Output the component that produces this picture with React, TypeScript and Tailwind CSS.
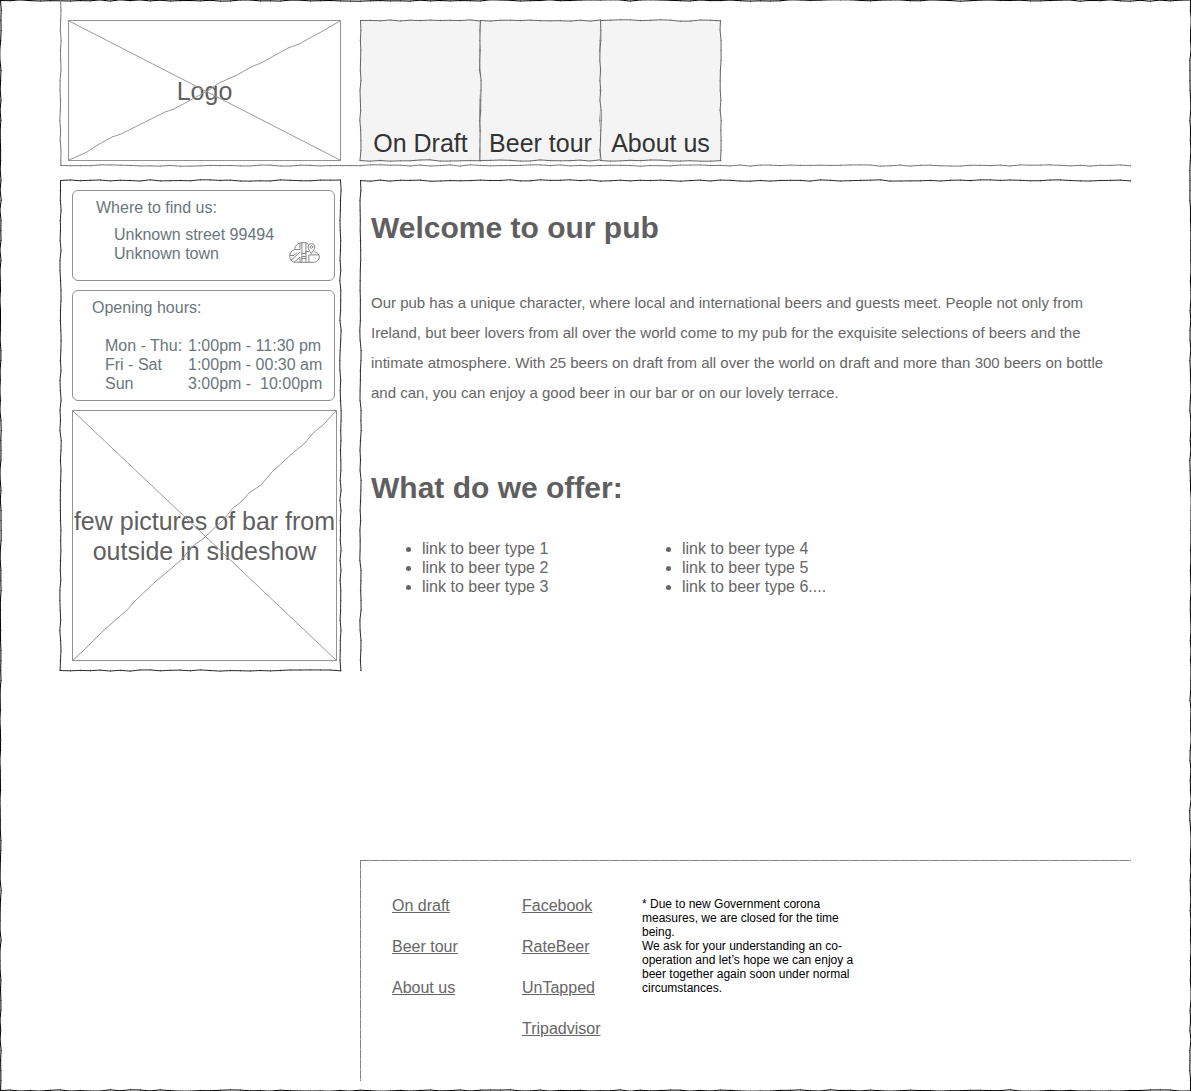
import React from "react";

type Side = "top" | "right" | "bottom" | "left";

const LENGTH = 4000;
const STEP = 10;

/** Builds a hand-drawn stroke with a small tick at every joint. */
function sketchPath(seed: number, vertical: boolean, flat: boolean) {
  let state = seed * 7919 + 17;
  const random = () => {
    state = (state * 1103515245 + 12345) % 2147483648;
    return state / 2147483648;
  };
  let line = "M0,2.5";
  let ticks = "";
  if (vertical) line = "M2.5,0";
  for (let at = STEP; at <= LENGTH; at += STEP) {
    const off = flat ? 2.5 : 2.5 + Math.round((random() * 2 - 1) * 7) / 10;
    const tickAt = at + 0.5;
    if (vertical) {
      line += `L${off},${at}`;
      ticks += `M${off - 1},${tickAt}h2`;
    } else {
      line += `L${at},${off}`;
      ticks += `M${tickAt},${off - 1}v2`;
    }
  }
  return { line, ticks };
}

const sideClass: Record<Side, string> = {
  top: "-top-0.5 left-0 h-[5px] w-full",
  bottom: "-bottom-0.5 left-0 h-[5px] w-full",
  left: "-left-0.5 top-0 h-full w-[5px]",
  right: "-right-0.5 top-0 h-full w-[5px]",
};

function SketchBorder({
  sides,
  seed,
  color,
  flat = false,
}: {
  sides: Side[];
  seed: number;
  color: string;
  flat?: boolean;
}) {
  return (
    <>
      {sides.map((side, i) => {
        const vertical = side === "left" || side === "right";
        const { line, ticks } = sketchPath(seed + i * 13, vertical, flat);
        return (
          <svg
            key={side}
            aria-hidden="true"
            className={`pointer-events-none absolute overflow-hidden ${color} ${sideClass[side]}`}
            fill="none"
            stroke="currentColor"
          >
            <path d={line} strokeDasharray={flat ? "9.5 0.5" : undefined} />
            {!flat && <path d={ticks} opacity={0.35} />}
          </svg>
        );
      })}
    </>
  );
}

function Placeholder({
  label,
  className,
  width,
  height,
  rising,
}: {
  label: string;
  className: string;
  width: number;
  height: number;
  rising: string;
}) {
  return (
    <div
      className={`relative flex items-center justify-center border border-[#929292] text-center text-[25px] leading-[30px] text-[#5f5f5f] ${className}`}
    >
      <span>{label}</span>
      <svg
        aria-hidden="true"
        className="absolute inset-0 h-full w-full text-[#999999]"
        viewBox={`0 0 ${width} ${height}`}
        preserveAspectRatio="none"
        fill="none"
        stroke="currentColor"
      >
        <path d={`M0,0L${width},${height}`} vectorEffect="non-scaling-stroke" />
        <path d={rising} vectorEffect="non-scaling-stroke" />
      </svg>
    </div>
  );
}

function MapIcon() {
  return (
    <svg
      aria-hidden="true"
      className="h-[21px] w-[31px] shrink-0 text-[#858585]"
      viewBox="0 0 31 21"
      fill="none"
      stroke="currentColor"
      strokeLinejoin="round"
      strokeLinecap="round"
    >
      <path d="M5.500 7.500C6 3.500 9 .8 13 .7h3c1.200 0 2 .3 2.700.9" />
      <path d="M5.500 7.500h5.500V1.300M5.500 7.500C2.500 8.500.7 11 .7 14.200c0 3.600 2.600 6.100 6 6.100h17.600c3.500 0 6-2.300 6-5.300 0-2.400-1.600-4.600-4.300-5.100" />
      <path d="M2 18.300 11 10.200M5.200 20.200 11 15v5.200M1 13.500h4l3-3" />
      <path d="M12.900.8v19.400M16.900.9v19.300M12.900 11.500h4M12.900 14.500h4M12.900 16.500h4" />
      <path d="M16.900 9.500h2.600M19.900 20.200v-7.300h9.600" />
      <path d="M22.400 11.300c-1.900-2.500-3.400-4.300-3.400-6.300a3.400 3.400 0 0 1 6.800 0c0 2-1.500 3.800-3.400 6.300Z" />
      <circle cx="22.400" cy="5" r="1.300" />
    </svg>
  );
}

const hours = [
  ["Mon - Thu:", "1:00pm - 11:30 pm"],
  ["Fri - Sat", "1:00pm - 00:30 am"],
  ["Sun", "3:00pm -  10:00pm"],
];

const tabs = ["On Draft", "Beer tour", "About us"];

const beerLinks = [
  ["link to beer type 1", "link to beer type 2", "link to beer type 3"],
  ["link to beer type 4", "link to beer type 5", "link to beer type 6...."],
];

const footerLinks = [
  ["On draft", "Beer tour", "About us"],
  ["Facebook", "RateBeer", "UnTapped", "Tripadvisor"],
];

export default function App() {
  return (
    <div className="relative flex min-h-screen flex-col overflow-hidden bg-white px-[60px] pb-[10px] font-['Liberation_Sans',Arial,sans-serif] text-base leading-[19px] text-[#666666]">
      <SketchBorder sides={["top", "right", "bottom", "left"]} seed={3} color="text-black" />

      <header className="relative grid grid-cols-[281px_1fr] gap-x-[19px] pt-5 pb-[5px]">
        <SketchBorder sides={["left", "bottom"]} seed={21} color="text-[#777777]" />
        <Placeholder
          label="Logo"
          className="ml-2 h-[141px]"
          width={271}
          height={139}
          rising="M0,139L18,131L27,125L43,116L52,113L96,91L105,88L140,69L150,62L168,54L182,46L192,42L219,27L230,23L252,11L271,0"
        />
        <nav className="flex">
          {tabs.map((tab, i) => (
            <a
              key={tab}
              href="#"
              className="relative -mr-px flex h-[141px] w-[121px] items-end justify-center bg-[#f4f4f4] pb-[3px] text-[25px] leading-[30px] whitespace-nowrap text-[#333333]"
            >
              {tab}
              <SketchBorder sides={["top", "right", "bottom", "left"]} seed={40 + i * 5} color="text-[#666666]" />
            </a>
          ))}
        </nav>
      </header>

      <div className="mt-[14px] grid grid-cols-[281px_1fr] gap-x-[19px]">
        <aside className="relative flex flex-col gap-[9px] py-[10px] pr-1 pl-3">
          <SketchBorder sides={["top", "right", "bottom", "left"]} seed={70} color="text-[#2b2b2b]" />
          <section className="mr-0.5 rounded-md border border-[#929292] pt-[7px] pr-[14px] pb-[17px] pl-[23px] text-[#6a767d]">
            <h2>Where to find us:</h2>
            <div className="mt-2 flex items-end justify-between pl-[18px]">
              <address className="not-italic">
                Unknown street 99494
                <br />
                Unknown town
              </address>
              <MapIcon />
            </div>
          </section>
          <section className="mr-0.5 rounded-md border border-[#929292] pt-[7px] pb-[7px] pl-[19px] text-[#6a767d]">
            <h2>Opening hours:</h2>
            <table className="mt-[19px] ml-[13px] text-left whitespace-pre">
              <tbody>
                {hours.map(([day, time]) => (
                  <tr key={day}>
                    <th scope="row" className="w-[83px] p-0 font-normal">
                      {day}
                    </th>
                    <td className="p-0">{time}</td>
                  </tr>
                ))}
              </tbody>
            </table>
          </section>
          <Placeholder
            label="few pictures of bar from outside in slideshow"
            className="h-[251px]"
            width={263}
            height={249}
            rising="M0,249L9,241L22,228L30,220L54,199L62,190L82,171L100,156L108,149L120,135L131,127L152,107L160,97L168,91L176,82L188,74L199,61L222,40L232,32L240,22L250,14L263,0"
          />
        </aside>

        <main className="relative pt-[30px] pr-5 pl-[11px]">
          <SketchBorder sides={["top", "left"]} seed={90} color="text-[#2b2b2b]" />
          <h1 className="text-[30px] leading-9 font-bold text-[#5f5f5f]">Welcome to our pub</h1>
          <p className="mt-[42px] text-[15px] leading-[30px]">
            Our pub has a unique character, where local and international beers and guests meet. People not only from
            Ireland, but beer lovers from all over the world come to my pub for the exquisite selections of beers and
            the intimate atmosphere. With 25 beers on draft from all over the world on draft and more than 300 beers on
            bottle and can, you can enjoy a good beer in our bar or on our lovely terrace.
          </p>
          <h2 className="mt-[62px] text-[30px] leading-9 font-bold text-[#5f5f5f]">What do we offer:</h2>
          <div className="mt-[33px] flex">
            {beerLinks.map((group) => (
              <ul key={group[0]} className="w-[260px] list-disc pl-[51px]">
                {group.map((name) => (
                  <li key={name}>
                    <a href="#">{name}</a>
                  </li>
                ))}
              </ul>
            ))}
          </div>
        </main>
      </div>

      <footer className="relative mt-auto ml-[300px] flex min-h-[221px] items-start pt-9 pl-8">
        <SketchBorder sides={["top", "left"]} seed={5} color="text-[#858585]" flat />
        {footerLinks.map((group, i) => (
          <ul key={group[0]} className={`flex flex-col gap-[22px] ${i === 0 ? "w-[130px]" : "w-[120px]"}`}>
            {group.map((name) => (
              <li key={name}>
                <a href="#" className="underline">
                  {name}
                </a>
              </li>
            ))}
          </ul>
        ))}
        <p className="mt-px w-[215px] text-xs leading-[14px] text-black">
          * Due to new Government corona measures, we are closed for the time being.
          <br />
          We ask for your understanding an co-operation and let’s hope we can enjoy a beer together again soon under
          normal circumstances.
        </p>
      </footer>
    </div>
  );
}
